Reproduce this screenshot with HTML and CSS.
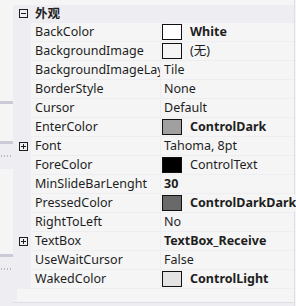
FILE: index.html
```html
<!DOCTYPE html>
<html lang="zh-CN">
<head>
  <meta charset="UTF-8">
  <title>Properties</title>
  <link rel="stylesheet" href="styles.css">
</head>
<body>
  <div class="frame">
    <!-- panel partly hidden behind the grid -->
    <div class="side">
      <div class="side-light h101"></div>
      <div class="side-bar"></div>
      <div class="side-light h37"></div>
      <div class="side-bar"></div>
      <div class="side-gray h25"><div class="dots"></div></div>
      <div class="side-light h85"></div>
      <div class="side-bar"></div>
      <div class="side-gray h49"><div class="dots"></div></div>
    </div>

    <div class="grid">
      <div class="top-strip"></div>
      <div class="cat">
        <span class="gut"><span class="toggle minus"></span></span>
        <span class="cat-name">外观</span>
      </div>

      <div class="row"><span class="gut"></span><span class="name">BackColor</span><span class="val bold"><i class="swatch sw-white"></i>White</span></div>
      <div class="row"><span class="gut"></span><span class="name">BackgroundImage</span><span class="val"><i class="swatch sw-none"></i>(无)</span></div>
      <div class="row"><span class="gut"></span><span class="name">BackgroundImageLayout</span><span class="val plain">Tile</span></div>
      <div class="row"><span class="gut"></span><span class="name">BorderStyle</span><span class="val plain">None</span></div>
      <div class="row"><span class="gut"></span><span class="name">Cursor</span><span class="val plain">Default</span></div>
      <div class="row"><span class="gut"></span><span class="name">EnterColor</span><span class="val bold"><i class="swatch sw-dark"></i>ControlDark</span></div>
      <div class="row"><span class="gut"><span class="toggle plus"></span></span><span class="name">Font</span><span class="val plain">Tahoma, 8pt</span></div>
      <div class="row"><span class="gut"></span><span class="name">ForeColor</span><span class="val"><i class="swatch sw-text"></i>ControlText</span></div>
      <div class="row"><span class="gut"></span><span class="name">MinSlideBarLenght</span><span class="val plain bold">30</span></div>
      <div class="row"><span class="gut"></span><span class="name">PressedColor</span><span class="val bold"><i class="swatch sw-darkdark"></i>ControlDarkDark</span></div>
      <div class="row"><span class="gut"></span><span class="name">RightToLeft</span><span class="val plain">No</span></div>
      <div class="row"><span class="gut"><span class="toggle plus"></span></span><span class="name">TextBox</span><span class="val plain bold">TextBox_Receive</span></div>
      <div class="row"><span class="gut"></span><span class="name">UseWaitCursor</span><span class="val plain">False</span></div>
      <div class="row"><span class="gut"></span><span class="name">WakedColor</span><span class="val bold"><i class="swatch sw-light"></i>ControlLight</span></div>

      <div class="foot"><span class="foot-edge"></span><span class="foot-fill"></span></div>
    </div>
  </div>
</body>
</html>
```

FILE: styles.css
```css
* { margin: 0; padding: 0; box-sizing: border-box; }
body {
  font-family: 'Noto Sans', 'Noto Sans CJK SC', sans-serif;
  font-size: 12.5px;
  color: #1e1e1e;
  background: #f5f5f5;
  width: 296px;
  height: 306px;
  overflow: hidden;
}
.frame {
  display: flex;
  height: 306px;
}

/* left panel */
.side { width: 13px; flex: none; }
.side-light { background: #f5f5f5; }
.side-gray { background: #eeeef2; padding-top: 11px; }
.side-bar { height: 3px; background: #cbcbd8; }
.h101 { height: 101px; }
.h37 { height: 37px; }
.h25 { height: 25px; }
.h85 { height: 85px; }
.h49 { height: 49px; }
.dots {
  height: 2px;
  margin-left: 1px;
  background: repeating-linear-gradient(90deg, #b9b9c4 0 1px, transparent 1px 3px);
}

/* property grid */
.grid {
  width: 282px;
  flex: none;
  background: #eeeef2;
  border-right: 1px solid #dedee4;
}
.top-strip { height: 5px; background: #f5f5f5; }
.cat {
  display: flex;
  align-items: center;
  height: 17px;
  background: #eeeef2;
}
.cat-name {
  padding-left: 4px;
  font-weight: 700;
  line-height: 17px;
}
.gut {
  width: 18px;
  flex: none;
  display: flex;
  align-items: center;
  justify-content: center;
  padding-left: 2px;
}
.toggle {
  position: relative;
  width: 9px;
  height: 9px;
  border: 1px solid #1e1e1e;
}
.toggle::before {
  content: "";
  position: absolute;
  left: 1px;
  top: 3px;
  width: 5px;
  height: 1px;
  background: #1e1e1e;
}
.plus::after {
  content: "";
  position: absolute;
  left: 3px;
  top: 1px;
  width: 1px;
  height: 5px;
  background: #1e1e1e;
}

.row {
  display: flex;
  height: 19px;
  border-top: 1px solid #eeeef2;
}
.name {
  width: 130px;
  flex: none;
  padding-left: 4px;
  background: #f5f5f5;
  border-right: 1px solid #eeeef2;
  white-space: nowrap;
  overflow: hidden;
  line-height: 18px;
}
.val {
  flex: 1;
  display: flex;
  align-items: center;
  padding-left: 1px;
  background: #f5f5f5;
  white-space: nowrap;
  line-height: 18px;
}
.val.plain { padding-left: 3px; }
.bold { font-weight: 700; }
.swatch {
  width: 20px;
  height: 16px;
  margin-right: 8px;
  border: 1px solid #111;
}
.sw-white { background: #fff; }
.sw-none { background: #f5f5f5; }
.sw-dark { background: #a0a0a0; }
.sw-text { background: #000; }
.sw-darkdark { background: #696969; }
.sw-light { background: #e3e3e3; }

.foot {
  display: flex;
  height: 15px;
  border-top: 1px solid #eeeef2;
  border-bottom: 1px solid #dedee4;
}
.foot-edge { width: 4px; background: #eeeef2; }
.foot-fill { flex: 1; background: #f5f5f5; }
```
